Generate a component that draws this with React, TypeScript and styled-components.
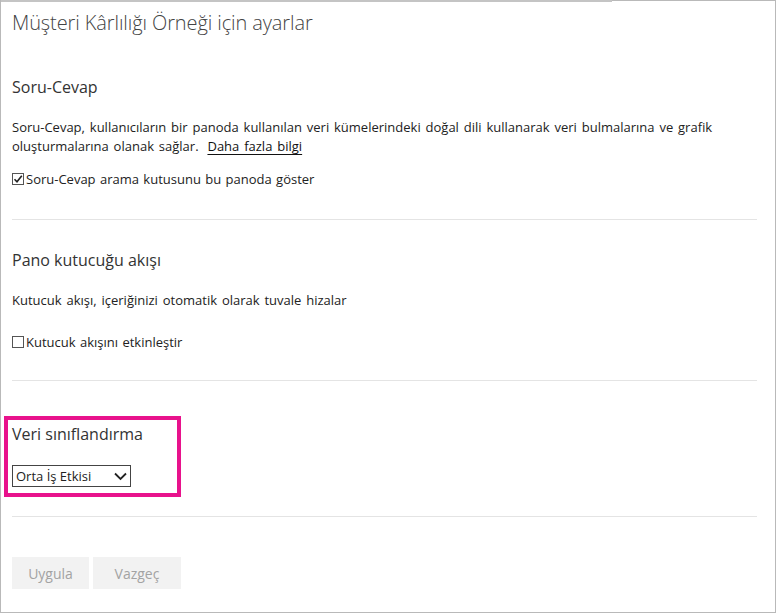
import React from 'react';
import styled, { createGlobalStyle } from 'styled-components';

const GlobalStyle = createGlobalStyle`
  html, body {
    margin: 0;
    padding: 0;
    background: #ffffff;
  }
  body {
    font-family: 'Open Sans', 'Noto Sans', sans-serif;
    color: #252525;
  }
`;

export default function App() {
  return (
    <>
      <GlobalStyle />
      <Frame>
        <TopEdge />
        <Title>Müşteri Kârlılığı Örneği için ayarlar</Title>

        <Section top={40} bottom={31}>
          <Heading>Soru-Cevap</Heading>
          <Text>
            Soru-Cevap, kullanıcıların bir panoda kullanılan veri kümelerindeki doğal dili kullanarak veri
            bulmalarına ve grafik oluşturmalarına olanak sağlar. <Link>Daha fazla bilgi</Link>
          </Text>
          <CheckRow gap={14}>
            <Box>
              <svg width="10" height="10" viewBox="0 0 10 10">
                <path d="M1.5 5.2 L4 7.8 L8.8 1.8" fill="none" stroke="#222" strokeWidth="1.6" />
              </svg>
            </Box>
            Soru-Cevap arama kutusunu bu panoda göster
          </CheckRow>
        </Section>
        <Divider />

        <Section top={29} bottom={29}>
          <Heading>Pano kutucuğu akışı</Heading>
          <Text>Kutucuk akışı, içeriğinizi otomatik olarak tuvale hizalar</Text>
          <CheckRow gap={23}>
            <Box />
            Kutucuk akışını etkinleştir
          </CheckRow>
        </Section>
        <Divider />

        <ClassSection>
          <Highlight />
          <Heading>Veri sınıflandırma</Heading>
          <Select>
            <span>Orta İş Etkisi</span>
            <svg width="13" height="9" viewBox="0 0 13 9">
              <path d="M1 1.5 L6.5 7 L12 1.5" fill="none" stroke="#222" strokeWidth="1.8" />
            </svg>
          </Select>
        </ClassSection>
        <Divider />

        <Buttons>
          <Button width={77}>Uygula</Button>
          <Button width={88}>Vazgeç</Button>
        </Buttons>
      </Frame>
    </>
  );
}

const Frame = styled.div`
  position: relative;
  box-sizing: border-box;
  width: 776px;
  height: 613px;
  border: 1px solid #b9b9b9;
  padding: 0 19px 0 11px;
  display: flex;
  flex-direction: column;
`;

const TopEdge = styled.div`
  position: absolute;
  top: -1px;
  left: 0;
  width: 611px;
  height: 2px;
  background: #c4c4c4;
`;

const Title = styled.h1`
  margin: 9px 0 0;
  font-size: 20px;
  font-weight: 300;
  line-height: 26px;
  color: #444;
  letter-spacing: -0.1px;
`;

const Section = styled.div<{ top: number; bottom: number }>`
  display: flex;
  flex-direction: column;
  padding-top: ${(p) => p.top}px;
  padding-bottom: ${(p) => p.bottom}px;
`;

const Heading = styled.h2`
  margin: 0;
  font-size: 16px;
  font-weight: 400;
  line-height: 22px;
  color: #333;
`;

const Text = styled.p`
  margin: 20px 0 0;
  font-size: 13px;
  line-height: 19px;
  word-spacing: 1.5px;
  max-width: 735px;
  color: #222;
`;

const Link = styled.a`
  margin-left: 4px;
  text-decoration: underline;
  text-underline-offset: 3px;
  color: #111;
`;

const CheckRow = styled.label<{ gap: number }>`
  margin-top: ${(p) => p.gap}px;
  display: flex;
  align-items: center;
  gap: 2px;
  font-size: 13px;
  line-height: 18px;
  word-spacing: 1px;
  color: #222;
`;

const Box = styled.span`
  box-sizing: border-box;
  width: 12px;
  height: 12px;
  border: 1px solid #555;
  display: flex;
  align-items: center;
  justify-content: center;
  background: #fff;
`;

const Divider = styled.hr`
  margin: 0;
  border: none;
  border-top: 1px solid #e4e4e4;
  width: 745px;
`;

const ClassSection = styled.div`
  position: relative;
  display: flex;
  flex-direction: column;
  align-items: flex-start;
  padding-top: 42px;
  padding-bottom: 29px;
`;

const Highlight = styled.div`
  position: absolute;
  box-sizing: border-box;
  left: -8px;
  top: 35px;
  width: 177px;
  height: 81px;
  border: 4px solid #e8128c;
`;

const Select = styled.div`
  margin-top: 20px;
  box-sizing: border-box;
  width: 119px;
  height: 22px;
  border: 1px solid #444;
  display: flex;
  align-items: center;
  justify-content: space-between;
  padding: 0 3px 0 3px;
  font-size: 13px;
  color: #222;
`;

const Buttons = styled.div`
  display: flex;
  gap: 4px;
  padding-top: 40px;
`;

const Button = styled.button<{ width: number }>`
  width: ${(p) => p.width}px;
  height: 32px;
  border: none;
  background: #f2f2f2;
  color: #a3a3a3;
  font-family: 'Open Sans', 'Noto Sans', sans-serif;
  font-size: 14px;
  font-weight: 400;
`;
